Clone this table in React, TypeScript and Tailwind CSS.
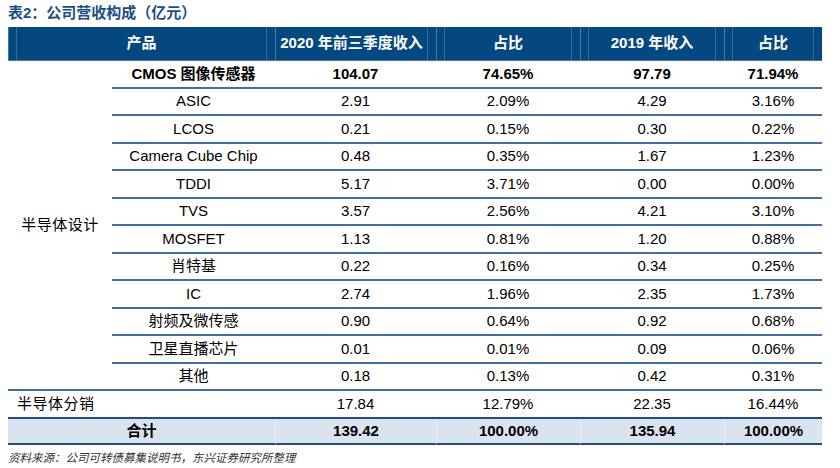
const design = [
  ['CMOS 图像传感器', '104.07', '74.65%', '97.79', '71.94%'],
  ['ASIC', '2.91', '2.09%', '4.29', '3.16%'],
  ['LCOS', '0.21', '0.15%', '0.30', '0.22%'],
  ['Camera Cube Chip', '0.48', '0.35%', '1.67', '1.23%'],
  ['TDDI', '5.17', '3.71%', '0.00', '0.00%'],
  ['TVS', '3.57', '2.56%', '4.21', '3.10%'],
  ['MOSFET', '1.13', '0.81%', '1.20', '0.88%'],
  ['肖特基', '0.22', '0.16%', '0.34', '0.25%'],
  ['IC', '2.74', '1.96%', '2.35', '1.73%'],
  ['射频及微传感', '0.90', '0.64%', '0.92', '0.68%'],
  ['卫星直播芯片', '0.01', '0.01%', '0.09', '0.06%'],
  ['其他', '0.18', '0.13%', '0.42', '0.31%'],
];

const line = 'border-b-2 border-[#3f6f9e]';

function HeadCell({ text, span, noLeft }: { text: string; span?: boolean; noLeft?: boolean }) {
  return (
    <div className={`flex border-l border-b border-[#4a78a6] bg-[#05487f] ${span ? 'col-span-2' : ''}`}>
      <div
        className={`flex flex-1 items-center justify-center mr-[8px] border-r border-[#3a6a99] ${
          noLeft ? '' : 'ml-[7px] border-l'
        }`}
      >
        <span className="text-white font-bold">{text}</span>
      </div>
    </div>
  );
}

export default function App() {
  return (
    <div
      className="w-[840px] h-[468px] bg-white pl-[8px] text-black"
      style={{ fontFamily: '"Liberation Sans", Arial, "Noto Sans CJK SC", sans-serif' }}
    >
      <div className="h-[27px] flex items-center text-[15px] font-bold text-[#1d4f85]">
        表2：公司营收构成（亿元）
      </div>

      <div className="grid w-[814px] text-[15px] grid-cols-[104px_163px_161px_144px_144px_98px] grid-rows-[34px_repeat(12,27.5px)_28px_26px]">
        <HeadCell text="产品" span />
        <HeadCell text="2020 年前三季度收入" noLeft />
        <HeadCell text="占比" />
        <HeadCell text="2019 年收入" />
        <HeadCell text="占比" />

        <div className={`row-span-12 flex items-center justify-center ${line}`}>
          <span className="tracking-[0.5px]">半导体设计</span>
        </div>

        {design.map((r, i) =>
          r.map((c, j) => (
            <div
              key={`${i}-${j}`}
              className={`flex items-center justify-center ${line} ${i === 0 ? 'font-bold' : ''}`}
            >
              {c}
            </div>
          )),
        )}

        <div className="col-span-2 flex items-center pl-[9px] border-b-2 border-[#1f4f82]">
          <span className="tracking-[0.5px]">半导体分销</span>
        </div>
        {['17.84', '12.79%', '22.35', '16.44%'].map((c, j) => (
          <div key={j} className="flex items-center justify-center border-b-2 border-[#1f4f82]">
            {c}
          </div>
        ))}

        <div className="col-span-2 flex items-center justify-center bg-[#dbe3ef] border-b-2 border-[#1f4f82] font-bold">
          合计
        </div>
        {['139.42', '100.00%', '135.94', '100.00%'].map((c, j) => (
          <div
            key={j}
            className="flex items-center justify-center bg-[#dbe3ef] border-b-2 border-l border-[#1f4f82] border-l-[#e6ecf4] font-bold"
          >
            {c}
          </div>
        ))}
      </div>

      <div className="mt-[5px] text-[11.5px] italic text-[#333]">
        资料来源：公司可转债募集说明书，东兴证券研究所整理
      </div>
    </div>
  );
}
